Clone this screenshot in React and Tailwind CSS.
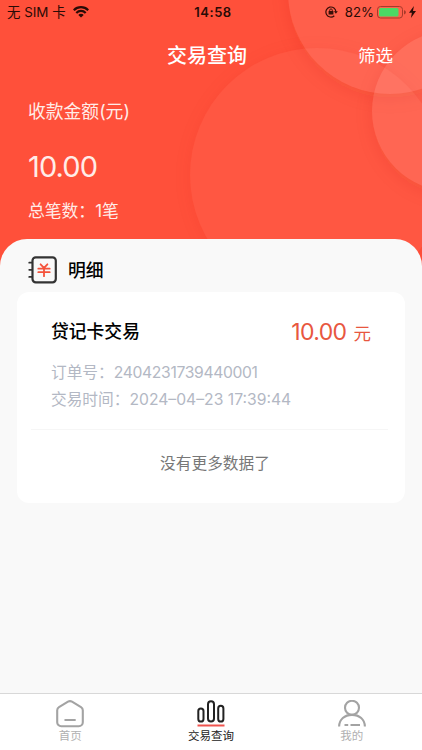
import React from 'react';

const TABS = [
    { key: 'home', label: '首页', icon: HomeIcon },
    { key: 'query', label: '交易查询', icon: ChartIcon },
    { key: 'mine', label: '我的', icon: UserIcon },
];

const RECORDS = [
    {
        type: '贷记卡交易',
        amount: '10.00',
        orderNo: '2404231739440001',
        time: '2024–04–23 17:39:44',
    },
];

function WifiIcon() {
    return (
        <svg width="16" height="12" viewBox="0 0 16 12" fill="none" stroke="#2a0b06" strokeWidth="2.2">
            <path d="M0.8 4.2a10.2 10.2 0 0 1 14.4 0" />
            <path d="M3.3 6.9a6.6 6.6 0 0 1 9.4 0" />
            <path d="M8 11.6 5.3 9a3.7 3.7 0 0 1 5.4 0z" fill="#2a0b06" stroke="none" />
        </svg>
    );
}

function RotationLockIcon() {
    return (
        <svg width="13" height="12" viewBox="0 0 13 12" fill="none" stroke="#3a0f08" strokeWidth="1.2">
            <path d="M10.9 6a5 5 0 1 0-1.6 3.7" />
            <path d="M8.9 5.3h3.9l-1.9 2.4z" fill="#3a0f08" stroke="none" />
            <rect x="3.6" y="5" width="4.8" height="3.6" rx="0.4" fill="#3a0f08" stroke="none" />
            <path d="M4.7 5.2v-1a1.3 1.3 0 0 1 2.6 0v1" strokeWidth="0.9" />
        </svg>
    );
}

function BatteryIcon() {
    return (
        <svg width="29" height="13" viewBox="0 0 29 13" fill="none">
            <rect x="0.5" y="0.5" width="25" height="11.5" rx="3" stroke="#a63a2b" />
            <rect x="2" y="2" width="19.5" height="8.5" rx="1.5" fill="#4cd964" />
            <path d="M27 4.2c1.3.4 1.9 1.2 1.9 2.1s-.6 1.7-1.9 2.1z" fill="#a63a2b" />
        </svg>
    );
}

function BoltIcon() {
    return (
        <svg width="7" height="12" viewBox="0 0 7 12" fill="#2a0b06">
            <path d="M4.9 0 0 6.8h2.9L1.9 12 7 4.9H4z" />
        </svg>
    );
}

function LedgerIcon() {
    return (
        <svg width="30" height="28" viewBox="0 0 30 28" fill="none" stroke="#333" strokeWidth="2.2" strokeLinecap="round">
            <rect x="4.5" y="1.3" width="23.3" height="25" rx="3.2" />
            <path d="M1.2 6.7h3M1.2 13.8h3M1.2 20.9h3" strokeWidth="1.7" />
            <path d="M12.6 8.3 16 11.9l3.4-3.6M10.3 12.7h11.4M10.3 16.2h11.4M16 12v8.2" stroke="#f4523b" strokeWidth="1.8" />
        </svg>
    );
}

function HomeIcon() {
    return (
        <svg width="28" height="28" viewBox="0 0 28 28" fill="none" stroke="#a3a3a3" strokeWidth="2.1" strokeLinecap="round" strokeLinejoin="round">
            <path d="M12 1.7 3 7.1A3.8 3.8 0 0 0 1.2 10.4V22.2A4 4 0 0 0 5.2 26.2H22.8A4 4 0 0 0 26.8 22.2V10.4A3.8 3.8 0 0 0 25 7.1L16 1.7A3.8 3.8 0 0 0 12 1.7z" />
            <path d="M9.3 20h9.6" />
        </svg>
    );
}

function ChartIcon() {
    return (
        <svg width="28" height="28" viewBox="0 0 28 28" fill="none" stroke="#222" strokeWidth="2">
            <rect x="1.3" y="8.5" width="5.2" height="13" rx="2.6" />
            <rect x="11" y="1.2" width="6" height="20.3" rx="3" />
            <rect x="21.2" y="5.8" width="5.2" height="15.7" rx="2.6" />
            <path d="M0.5 25.5h27" stroke="#f0544f" />
        </svg>
    );
}

function UserIcon() {
    return (
        <svg width="28" height="28" viewBox="0 0 28 28" fill="none" stroke="#a3a3a3" strokeWidth="2.1">
            <circle cx="14" cy="7.8" r="7" />
            <path d="M1.1 26.5C1.3 19.5 6.5 14.9 14 14.9S26.7 19.5 26.9 26.5M6.5 25h3.7M12.5 25h9.5" />
        </svg>
    );
}

function HeaderCircles() {
    return (
        <svg className="absolute inset-0" width="422" height="270" viewBox="0 0 422 270">
            <defs>
                <filter id="soft" x="-30%" y="-30%" width="160%" height="160%">
                    <feGaussianBlur stdDeviation="8" />
                </filter>
                {/* shadows only show outside of each circle */}
                <mask id="m1"><rect width="422" height="270" fill="#fff" /><circle cx="317" cy="175" r="127" fill="#000" /></mask>
                <mask id="m2"><rect width="422" height="270" fill="#fff" /><circle cx="390" cy="-8" r="102" fill="#000" /></mask>
                <mask id="m3"><rect width="422" height="270" fill="#fff" /><circle cx="453" cy="111" r="81" fill="#000" /></mask>
            </defs>
            <g fill="#c8200a" fillOpacity="0.14">
                <g mask="url(#m1)"><circle cx="317" cy="177" r="127" filter="url(#soft)" fillOpacity="0.08" /></g>
                <g mask="url(#m2)"><circle cx="390" cy="-4" r="102" filter="url(#soft)" /></g>
                <g mask="url(#m3)"><circle cx="453" cy="115" r="81" filter="url(#soft)" /></g>
            </g>
            <g fill="#fff">
                <circle cx="317" cy="175" r="127" fillOpacity="0.045" />
                <circle cx="390" cy="-8" r="102" fillOpacity="0.085" />
                <circle cx="453" cy="111" r="81" fillOpacity="0.095" />
            </g>
        </svg>
    );
}

function StatusBar() {
    return (
        <div className="grid grid-cols-3 items-center h-6 pl-[7px] pr-[6px] text-[13px] leading-6 text-[#2a0b06]">
            <div className="flex items-center gap-[7px]">
                <span className="whitespace-nowrap text-[13.4px]">无 SIM 卡</span>
                <WifiIcon />
            </div>
            <div className="pl-[3px] text-center font-semibold tracking-[0.5px]">14:58</div>
            <div className="flex items-center justify-end">
                <RotationLockIcon />
                <span className="ml-[7px] mr-[3px] text-[13.2px]">82%</span>
                <BatteryIcon />
                <span className="ml-[3px]"><BoltIcon /></span>
            </div>
        </div>
    );
}

function RecordCard({ record }) {
    return (
        <div className="ml-[14px] mr-[17px] pl-5 pr-[17px] pt-[26px] h-[138px] border-b border-[#f6f6f6]">
            <div className="flex items-center justify-between h-7">
                <span className="text-[17.8px] font-medium text-black">{record.type}</span>
                <span className="flex items-baseline gap-[7px] text-[#e8573f]">
                    <span className="text-[23px] tracking-[-0.6px]">{record.amount}</span>
                    <span className="text-[17.5px]">元</span>
                </span>
            </div>
            <div className="mt-[13px] text-[15.7px] leading-[27px] text-[#b3b8c4]">
                <p>订单号：<span className="tracking-[-0.35px]">{record.orderNo}</span></p>
                <p>交易时间：{record.time}</p>
            </div>
        </div>
    );
}

export default function App() {
    return (
        <div className="flex flex-col w-[422px] h-[750px] overflow-hidden bg-[#f9f9f9] font-['Inter','Noto_Sans_CJK_SC',sans-serif]">
            <header className="relative h-[270px] shrink-0 bg-[#ff503a]">
                <HeaderCircles />
                <div className="relative">
                    <StatusBar />
                    <div className="grid grid-cols-3 items-center h-[62px] pt-[2px] text-white">
                        <span />
                        <h1 className="text-center text-[20px] font-medium -translate-x-1">交易查询</h1>
                        <span className="text-right pr-[29px] text-[17.5px]">筛选</span>
                    </div>
                    <div className="pl-[28px] text-[#ffece8]">
                        <p className="mt-[13px] text-[17.8px] leading-[26px]">收款金额(元)</p>
                        <p className="mt-[23px] text-[29px] leading-[38px] tracking-[-0.9px]">10.00</p>
                        <p className="mt-[12px] text-[16.8px] leading-[26px]">总笔数：1笔</p>
                    </div>
                </div>
            </header>

            <main className="relative flex-1 -mt-[31px] rounded-t-[27px] bg-[#f9f9f9]">
                <div className="flex items-center gap-[10px] h-[53px] pl-[28px] pt-[8px]">
                    <LedgerIcon />
                    <h2 className="pt-[3px] text-[17.8px] font-medium text-black">明细</h2>
                </div>
                <section className="mx-[17px] h-[211px] rounded-[12px] bg-white">
                    {RECORDS.map((record) => (
                        <RecordCard key={record.orderNo} record={record} />
                    ))}
                    <p className="pt-[21px] pl-2 text-center text-[15.7px] leading-[26px] text-[#777]">没有更多数据了</p>
                </section>
            </main>

            <nav className="grid grid-cols-3 h-[57px] shrink-0 border-t border-[#d8d8d8] bg-white">
                {TABS.map(({ key, label, icon: Icon }) => (
                    <button key={key} className="flex flex-col items-center pt-[6px]">
                        <Icon />
                        <span className={`text-[11.5px] leading-[16px] ${key === 'query' ? 'text-[#222]' : 'text-[#b0b0b0]'}`}>
                            {label}
                        </span>
                    </button>
                ))}
            </nav>
        </div>
    );
}
